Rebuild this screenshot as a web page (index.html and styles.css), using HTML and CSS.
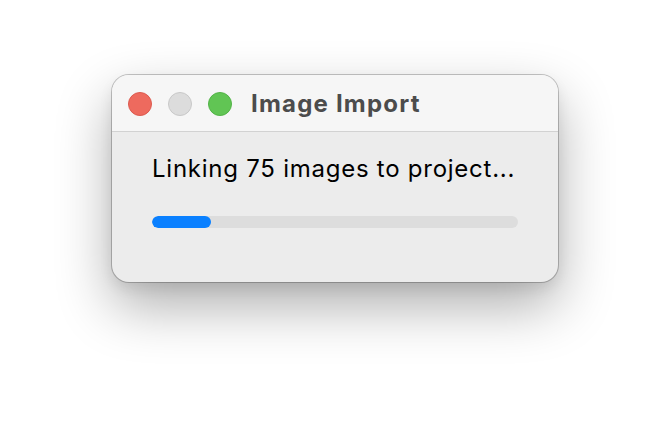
FILE: index.html
```html
<!DOCTYPE html>
<html>
<head>
<meta charset="utf-8">
<link rel="stylesheet" href="styles.css">
</head>
<body>
<div class="stage">
  <div class="window">
    <div class="titlebar">
      <div class="lights">
        <span class="light close"></span>
        <span class="light min"></span>
        <span class="light max"></span>
      </div>
      <div class="title">Image Import</div>
    </div>
    <div class="content">
      <div class="message">Linking 75 images to project...</div>
      <div class="progress"><div class="fill" style="width:16%"></div></div>
    </div>
  </div>
</div>
</body>
</html>
```

FILE: styles.css
```css
html, body {
  margin: 0;
  padding: 0;
  background: #ffffff;
  width: 670px;
  height: 430px;
  overflow: hidden;
  font-family: Inter, "Open Sans", "Liberation Sans", sans-serif;
}
.stage {
  padding: 75px 0 0 112px;
}
.window {
  width: 446px;
  height: 207px;
  box-sizing: border-box;
  border-radius: 17px;
  background: #ececec;
  overflow: hidden;
  box-shadow: 0 0 0 1px rgba(0,0,0,0.22), 0 24px 55px rgba(0,0,0,0.32), 0 6px 14px rgba(0,0,0,0.08);
  display: flex;
  flex-direction: column;
}
.titlebar {
  height: 55px;
  background: #f6f6f6;
  border-bottom: 1px solid #d2d2d2;
  display: flex;
  align-items: center;
  padding-left: 16px;
  padding-top: 1px;
}
.lights {
  display: flex;
  gap: 16px;
}
.light {
  width: 24px;
  height: 24px;
  box-sizing: border-box;
  border-radius: 50%;
  display: block;
}
.close { background: #ee6a5e; border: 1px solid #dc5a4f; }
.min { background: #dcdcdc; border: 1px solid #c8c8c8; }
.max { background: #61c554; border: 1px solid #52b347; }
.title {
  margin-left: 19px;
  font-weight: 700;
  font-size: 24px;
  color: #4c4c4c;
  letter-spacing: 1.2px;
}
.content {
  padding: 22px 40px 0 40px;
}
.message {
  font-size: 24px;
  color: #000;
  line-height: 30px;
  letter-spacing: 0.75px;
}
.progress {
  margin-top: 32px;
  height: 12px;
  width: 366px;
  border-radius: 6px;
  background: #dddddd;
  overflow: hidden;
}
.fill {
  height: 100%;
  background: #0a80ff;
  border-radius: 6px;
}
```
